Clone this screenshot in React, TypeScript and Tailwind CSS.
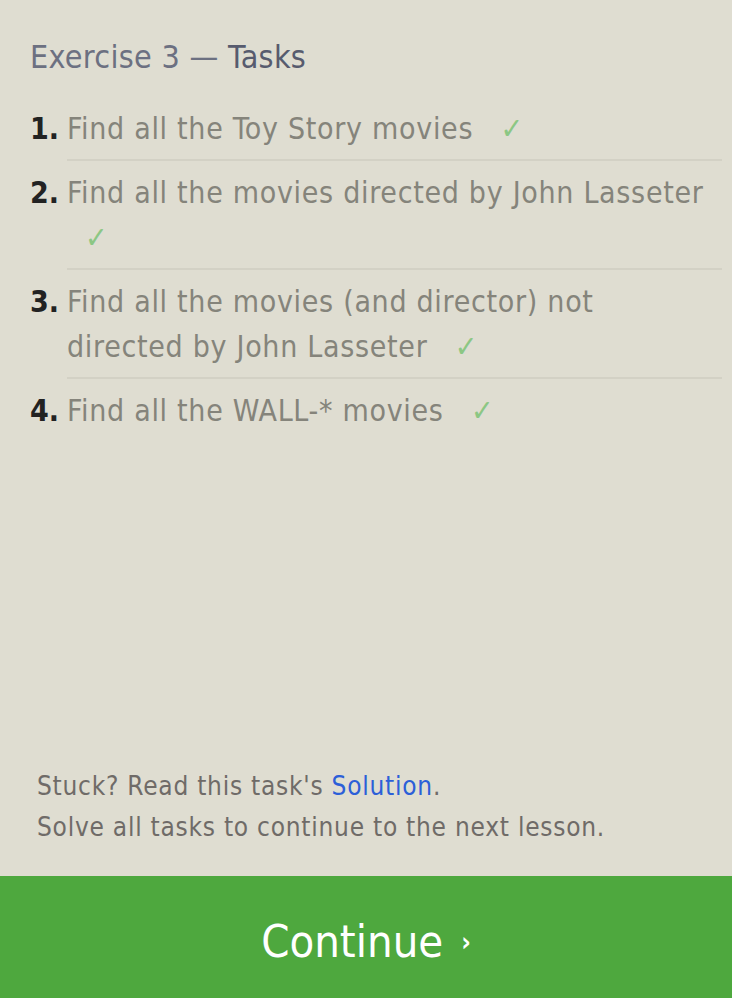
const tasks = [
  "Find all the Toy Story movies",
  "Find all the movies directed by John Lasseter",
  "Find all the movies (and director) not\ndirected by John Lasseter",
  "Find all the WALL-* movies",
];

function Check() {
  return <span className="ml-[18px] text-[#8cc784]">✓</span>;
}

export default function App() {
  return (
    <div className="min-h-screen flex flex-col bg-[#dfddd1] font-['DejaVu_Sans_Condensed','DejaVu_Sans',sans-serif] [font-stretch:condensed]">
      <div className="flex-1 pl-[30px] pr-[10px] pt-[34px]">
        <h2 className="text-[32px] leading-[46px] tracking-[0.3px] text-[#6c7081]">
          Exercise 3 — <span className="text-[#575b6e]">Tasks</span>
        </h2>
        <ol className="mt-[17px]">
          {tasks.map((t, i) => (
            <li key={i} className="flex text-[30px] leading-[45px] tracking-[0.7px]">
              <span className="w-[37px] shrink-0 font-bold tracking-normal text-[#222] py-[8.5px]">{i + 1}.</span>
              <div
                className={
                  "flex-1 py-[8.5px] whitespace-pre-line text-[#85847b] " +
                  (i < tasks.length - 1 ? "border-b-2 border-[#d3d1c5]" : "")
                }
              >
                {t} <Check />
              </div>
            </li>
          ))}
        </ol>
      </div>
      <div className="px-[37px] pb-[28px] text-[26px] leading-[41px] tracking-[0.75px] text-[#6f6b68]">
        <p>
          Stuck? Read this task's <a className="text-[#2c5fd8]">Solution</a>.
        </p>
        <p>Solve all tasks to continue to the next lesson.</p>
      </div>
      <button className="h-[122px] w-full bg-[#4ea83e] text-white text-[45px] pt-[10px] flex items-center justify-center">
        Continue
        <span className="ml-[18px] text-[26px] font-bold">›</span>
      </button>
    </div>
  );
}
